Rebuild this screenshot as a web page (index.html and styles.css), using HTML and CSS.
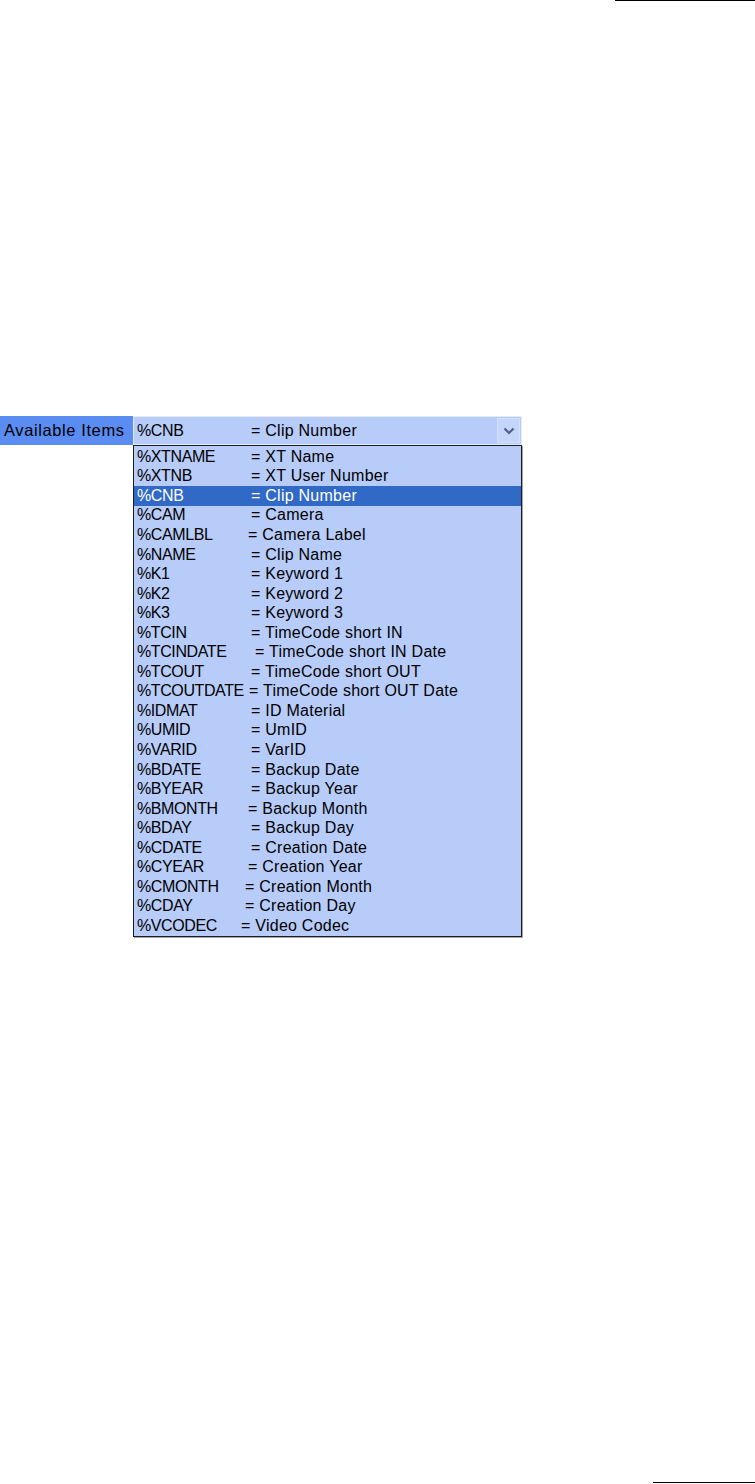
FILE: index.html
```html
<!DOCTYPE html>
<html>
<head>
<meta charset="utf-8">
<link rel="stylesheet" href="styles.css">
</head>
<body>
<div class="page">
  <div class="rule-top"></div>
  <div class="figure">
    <div class="label">Available Items</div>
    <div class="control">
      <div class="combo">
        <span class="code">%CNB</span><span class="desc">= Clip Number</span>
        <span class="btn"><svg width="12" height="8" viewBox="0 0 12 8"><path d="M1.5 1.5 L6 6 L10.5 1.5" fill="none" stroke="#4d6185" stroke-width="2.2"/></svg></span>
      </div>
      <div class="list">
        <div class="row"><span class="code">%XTNAME</span><span class="desc">= XT Name</span></div>
        <div class="row"><span class="code">%XTNB</span><span class="desc">= XT User Number</span></div>
        <div class="row sel"><span class="code">%CNB</span><span class="desc">= Clip Number</span></div>
        <div class="row"><span class="code">%CAM</span><span class="desc">= Camera</span></div>
        <div class="row"><span class="code">%CAMLBL</span><span class="desc n1">= Camera Label</span></div>
        <div class="row"><span class="code">%NAME</span><span class="desc">= Clip Name</span></div>
        <div class="row"><span class="code">%K1</span><span class="desc">= Keyword 1</span></div>
        <div class="row"><span class="code">%K2</span><span class="desc">= Keyword 2</span></div>
        <div class="row"><span class="code">%K3</span><span class="desc">= Keyword 3</span></div>
        <div class="row"><span class="code">%TCIN</span><span class="desc">= TimeCode short IN</span></div>
        <div class="row"><span class="code">%TCINDATE</span><span class="desc w">= TimeCode short IN Date</span></div>
        <div class="row"><span class="code">%TCOUT</span><span class="desc">= TimeCode short OUT</span></div>
        <div class="row"><span class="code">%TCOUTDATE</span><span class="desc n1b">= TimeCode short OUT Date</span></div>
        <div class="row"><span class="code">%IDMAT</span><span class="desc">= ID Material</span></div>
        <div class="row"><span class="code">%UMID</span><span class="desc">= UmID</span></div>
        <div class="row"><span class="code">%VARID</span><span class="desc">= VarID</span></div>
        <div class="row"><span class="code">%BDATE</span><span class="desc">= Backup Date</span></div>
        <div class="row"><span class="code">%BYEAR</span><span class="desc">= Backup Year</span></div>
        <div class="row"><span class="code">%BMONTH</span><span class="desc n1">= Backup Month</span></div>
        <div class="row"><span class="code">%BDAY</span><span class="desc">= Backup Day</span></div>
        <div class="row"><span class="code">%CDATE</span><span class="desc">= Creation Date</span></div>
        <div class="row"><span class="code">%CYEAR</span><span class="desc n1">= Creation Year</span></div>
        <div class="row"><span class="code">%CMONTH</span><span class="desc n2">= Creation Month</span></div>
        <div class="row"><span class="code">%CDAY</span><span class="desc n2">= Creation Day</span></div>
        <div class="row"><span class="code">%VCODEC</span><span class="desc n3">= Video Codec</span></div>
      </div>
    </div>
  </div>
  <div class="rule-bottom"></div>
</div>
</body>
</html>
```

FILE: styles.css
```css
html, body {
  margin: 0;
  padding: 0;
  background: #ffffff;
}
.page {
  height: 1484px;
  display: flex;
  flex-direction: column;
  font-family: "Liberation Sans", Arial, sans-serif;
  font-size: 16px;
  color: #000;
}
.rule-top {
  margin-left: 615px;
  height: 1px;
  background: #000;
}
.figure {
  margin-top: 415px;
  display: flex;
  align-items: flex-start;
}
.label {
  width: 129px;
  height: 29px;
  padding-left: 4px;
  background: #5b8cf2;
  display: flex;
  align-items: center;
  font-size: 16.5px;
  letter-spacing: 0.6px;
  white-space: nowrap;
}
.control {
  width: 389px;
  display: flex;
  flex-direction: column;
}
.combo {
  position: relative;
  height: 27px;
  border: 1px solid #e4ebfb;
  background: #b8ccf9;
  display: flex;
  align-items: center;
}
.code {
  width: 114px;
  padding-left: 3px;
  flex: none;
  letter-spacing: -0.4px;
}
.desc {
  letter-spacing: 0.25px;
}
.btn {
  position: absolute;
  right: 1px;
  top: 1px;
  width: 23px;
  height: 25px;
  background: #c5d6fb;
  border: 1px solid #d4e0fb;
  box-sizing: border-box;
  display: flex;
  align-items: center;
  justify-content: center;
}
.list {
  height: 489px;
  border: 1px solid #1c1c24;
  box-shadow: 1px 1px 0 #a6a6a6;
  background: #b8ccf9;
  display: flex;
  flex-direction: column;
  padding-top: 1px;
}
.row {
  height: 19.56px;
  display: flex;
  align-items: center;
  white-space: nowrap;
}
.row.sel {
  background: #3169c6;
  color: #ffffff;
}
.desc.w { margin-left: 4px; }
.desc.n1 { margin-left: -3px; }
.desc.n1b { margin-left: -2px; }
.desc.n2 { margin-left: -6px; }
.desc.n3 { margin-left: -10px; }
.rule-bottom {
  margin-top: auto;
  margin-left: 653px;
  margin-bottom: 1px;
  height: 1px;
  background: #000;
}
```
